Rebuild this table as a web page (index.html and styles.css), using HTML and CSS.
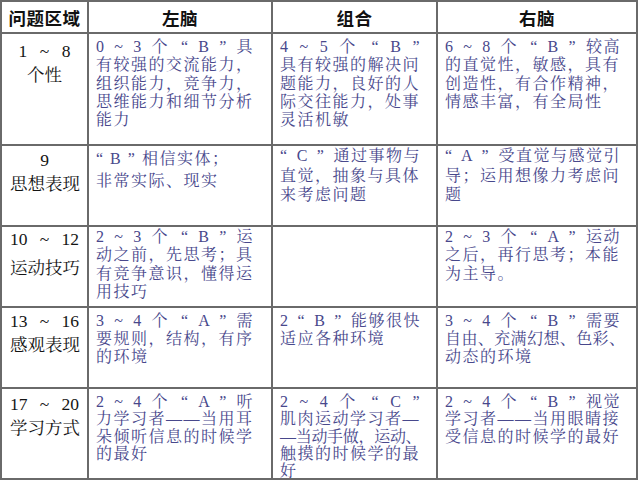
FILE: index.html
```html
<!DOCTYPE html>
<html lang="zh-CN">
<head>
<meta charset="utf-8">
<title>左右脑</title>
<link rel="stylesheet" href="styles.css">
</head>
<body>
<div class="tbl">
  <div class="h">问题区域</div>
  <div class="h">左脑</div>
  <div class="h">组合</div>
  <div class="h">右脑</div>

  <div class="c1 r1"><span class="ln n1">1 ~ 8</span><span class="ln">个性</span></div>
  <div class="c c2 r1">
    <span class="ln j">0 ~ 3 个 “ B ” 具</span>
    <span class="ln">有较强的交流能力，</span>
    <span class="ln">组织能力，竞争力，</span>
    <span class="ln">思维能力和细节分析</span>
    <span class="ln">能力</span>
  </div>
  <div class="c c3 r1">
    <span class="ln j">4 ~ 5 个 “ B ”</span>
    <span class="ln">具有较强的解决问</span>
    <span class="ln">题能力，良好的人</span>
    <span class="ln">际交往能力，处事</span>
    <span class="ln">灵活机敏</span>
  </div>
  <div class="c c4 r1">
    <span class="ln j">6 ~ 8 个 “ B ” <span class="nb">较高</span></span>
    <span class="ln">的直觉性，敏感，具有</span>
    <span class="ln">创造性，有合作精神，</span>
    <span class="ln">情感丰富，有全局性</span>
  </div>

  <div class="c1 r2"><span class="ln">9</span><span class="ln">思想表现</span></div>
  <div class="c c2 r2 para">
    <span class="ln">“ B ” 相信实体；</span>
    <span class="ln">非常实际、现实</span>
  </div>
  <div class="c c3 r2">
    <span class="ln j">“ C ” <span class="nb">通过事物与</span></span>
    <span class="ln">直觉，抽象与具体</span>
    <span class="ln">来考虑问题</span>
  </div>
  <div class="c c4 r2">
    <span class="ln j">“ A ” <span class="nb">受直觉与感觉引</span></span>
    <span class="ln">导；运用想像力考虑问</span>
    <span class="ln">题</span>
  </div>

  <div class="c1 r3"><span class="ln j">10 ~ 12</span><span class="ln gap">运动技巧</span></div>
  <div class="c c2 r3">
    <span class="ln j">2 ~ 3 个 “ B ” 运</span>
    <span class="ln">动之前，先思考；具</span>
    <span class="ln">有竞争意识，懂得运</span>
    <span class="ln">用技巧</span>
  </div>
  <div class="c c3 r3"></div>
  <div class="c c4 r3">
    <span class="ln j">2 ~ 3 个 “ A ” <span class="nb">运动</span></span>
    <span class="ln">之后，再行思考；本能</span>
    <span class="ln">为主导。</span>
  </div>

  <div class="c1 r4"><span class="ln j">13 ~ 16</span><span class="ln">感观表现</span></div>
  <div class="c c2 r4">
    <span class="ln j">3 ~ 4 个 “ A ” 需</span>
    <span class="ln">要规则，结构，有序</span>
    <span class="ln">的环境</span>
  </div>
  <div class="c c3 r4">
    <span class="ln j">2 “ B ” <span class="nb">能够很快</span></span>
    <span class="ln">适应各种环境</span>
  </div>
  <div class="c c4 r4">
    <span class="ln j">3 ~ 4 个 “ B ” <span class="nb">需要</span></span>
    <span class="ln tight">自由、充满幻想、色彩、</span>
    <span class="ln">动态的环境</span>
  </div>

  <div class="c1 r5"><span class="ln j">17 ~ 20</span><span class="ln">学习方式</span></div>
  <div class="c c2 r5">
    <span class="ln j">2 ~ 4 个 “ A ” 听</span>
    <span class="ln">力学习者<span class="dash">—</span>—当用耳</span>
    <span class="ln">朵倾听信息的时候学</span>
    <span class="ln">的最好</span>
  </div>
  <div class="c c3 r5">
    <span class="ln j">2 ~ 4 个 “ C ”</span>
    <span class="ln">肌肉运动学习者—</span>
    <span class="ln squeeze">—当动手做，运动、</span>
    <span class="ln">触摸的时候学的最</span>
    <span class="ln">好</span>
  </div>
  <div class="c c4 r5">
    <span class="ln j">2 ~ 4 个 “ B ” <span class="nb">视觉</span></span>
    <span class="ln">学习者<span class="dash">—</span>—当用眼睛接</span>
    <span class="ln">受信息的时候学的最好</span>
  </div>
</div>
</body>
</html>
```
FILE: styles.css
```css
html, body {
  margin: 0;
  padding: 0;
  background: #ffffff;
}

.tbl {
  display: grid;
  grid-template-columns: 85px 182px 163px 198px;
  grid-template-rows: 30px 110px 79px 79px 79px 89px;
  gap: 2px;
  padding: 2px;
  width: max-content;
  background: #6a6a6a;
}

.tbl > div {
  background: #ffffff;
  overflow: hidden;
}

.h {
  display: flex;
  align-items: center;
  justify-content: center;
  font-family: "Noto Sans CJK SC", "Noto Sans", sans-serif;
  font-weight: 700;
  font-size: 17.5px;
  letter-spacing: 0.5px;
  color: #111111;
  padding-top: 1px;
}

.ln {
  display: block;
  white-space: nowrap;
}

.j {
  text-align: justify;
  text-align-last: justify;
}

.nb {
  display: inline-block;
}

.dash {
  letter-spacing: 0;
  margin-right: 1.5px;
}

/* first column: row labels */
.c1 {
  box-sizing: border-box;
  padding: 0 8px;
  text-align: center;
  font-family: "Liberation Serif", "Noto Serif CJK SC", "Noto Sans CJK SC", serif;
  font-size: 17.5px;
  line-height: 24px;
  color: #141414;
}

.c1 .n1 {
  width: 52px;
  margin: 0 auto;
  text-align: justify;
  text-align-last: justify;
}

.c1.r1 { padding-top: 5px; }
.c1.r2 { padding-top: 2px; }
.c1.r3 { padding-top: 0; }
.c1.r4 { padding-top: 1px; }
.c1.r5 { padding-top: 3px; }
.c1 .gap { margin-top: 5px; }

/* content cells */
.c {
  box-sizing: border-box;
  font-family: "Liberation Serif", "Noto Serif CJK SC", "Noto Sans CJK SC", serif;
  font-size: 16px;
  letter-spacing: 1.5px;
  line-height: 18.3px;
  color: #48488c;
  padding-left: 7px;
}

.c2 { padding-right: 17px; }
.c3 { padding-right: 15px; }
.c4 { padding-right: 15px; }

.c.r1 { padding-top: 4px; }
.c.r2 { padding-top: 0; line-height: 19.5px; }
.c.r2.para { padding-top: 2px; line-height: 21.5px; }
.c.r3 { padding-top: 1px; }
.c.r4 { padding-top: 4px; line-height: 17.8px; }
.c.r5 { padding-top: 4px; line-height: 17.3px; }

.tight { letter-spacing: 0.4px; }
.squeeze { letter-spacing: -0.3px; }
```
